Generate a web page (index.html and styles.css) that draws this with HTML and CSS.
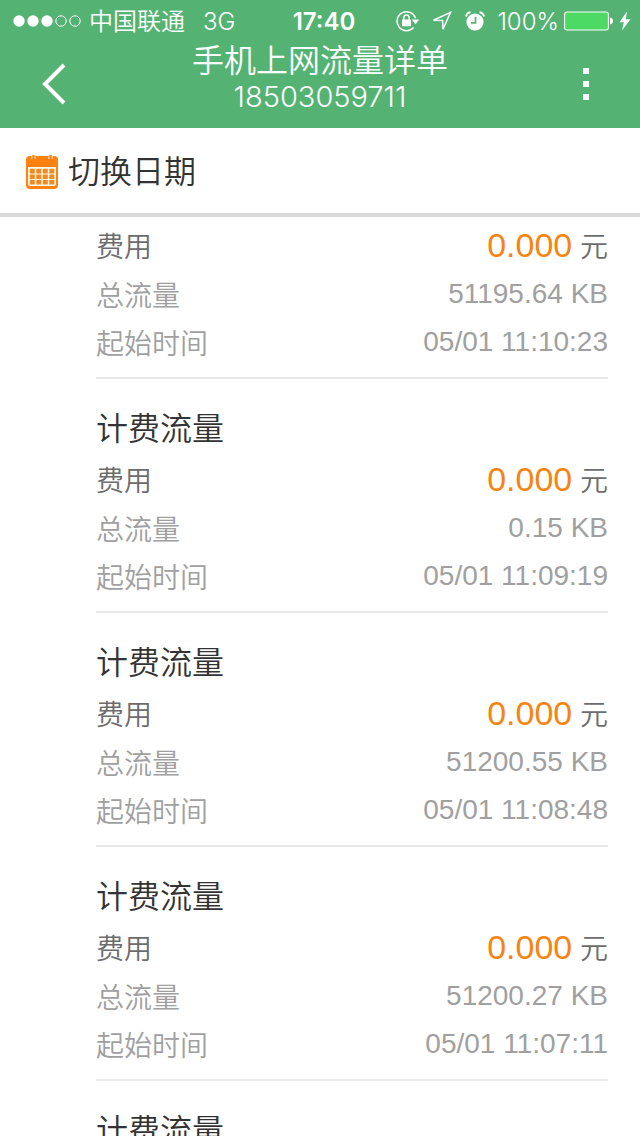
FILE: index.html
```html
<!DOCTYPE html>
<html lang="zh-CN">
<head>
<meta charset="utf-8">
<meta name="viewport" content="width=device-width, initial-scale=1">
<title>手机上网流量详单</title>
<link rel="stylesheet" href="styles.css">
</head>
<body>
<header class="top">
  <div class="status">
    <div class="status-left">
      <svg class="signal" width="68" height="12" viewBox="0 0 68 12" aria-hidden="true">
        <g fill="#fff"><circle cx="6" cy="6" r="5.7"/><circle cx="20" cy="6" r="5.7"/><circle cx="34" cy="6" r="5.7"/></g>
        <g fill="none" stroke="#fff"><circle cx="48" cy="6" r="5.2"/><circle cx="62" cy="6" r="5.2"/></g>
      </svg>
      <span class="carrier">中国联通</span>
      <span>3G</span>
    </div>
    <span class="clock">17:40</span>
    <div class="status-right">
      <svg width="24" height="22" viewBox="0 0 24 22" aria-hidden="true">
        <path d="M17.6 17.6A9.500 9.500 0 1 1 19.600 8.200" fill="none" stroke="#fff" stroke-width="1.500"/>
        <path d="M15.800 9.600h7.400l-3.700 4.600z" fill="#fff"/>
        <rect x="6" y="9.500" width="9" height="6.800" rx=".6" fill="#fff"/>
        <path d="M7.800 10V7.600a2.700 2.700 0 0 1 5.400 0V10" fill="none" stroke="#fff" stroke-width="1.500"/>
      </svg>
      <svg class="arrow" width="20" height="20" viewBox="0 0 20 20" aria-hidden="true">
        <path d="M1.500 9.200L18.500 1.400L11 18.200L10.600 9.400z" fill="none" stroke="#fff" stroke-width="1.500"/>
      </svg>
      <svg class="alarm" width="20" height="20" viewBox="0 0 20 20" aria-hidden="true">
        <circle cx="10" cy="11" r="8.600" fill="#fff"/>
        <path d="M.8 5.400A6 6 0 0 1 5.500 1.200M19.200 5.400A6 6 0 0 0 14.500 1.200" fill="none" stroke="#fff" stroke-width="1.700"/>
        <path d="M10.500 5.800v6H6" fill="none" stroke="#54b373" stroke-width="1.700"/>
      </svg>
      <span class="percent">100%</span>
      <svg width="50" height="20" viewBox="0 0 50 20" aria-hidden="true">
        <rect x=".6" y="1" width="43.800" height="18" rx="2.500" fill="#4cd964" stroke="#fff" stroke-width="1.100"/>
        <path d="M46 6.500c4 .8 4 6.200 0 7z" fill="#fff"/>
      </svg>
      <svg class="bolt" width="12" height="20" viewBox="0 0 12 20" aria-hidden="true">
        <path d="M8 .5L.5 11.200h4.300L3 19.500L11.500 8.200H6.800z" fill="#fff"/>
      </svg>
    </div>
  </div>
  <div class="nav">
    <button class="nav-button" type="button" aria-label="返回">
      <svg width="24" height="42" viewBox="0 0 24 42" aria-hidden="true"><path d="M22 2L3 21L22 40" fill="none" stroke="#fff" stroke-width="4"/></svg>
    </button>
    <div class="heading">
      <h1>手机上网流量详单</h1>
      <p>18503059711</p>
    </div>
    <button class="nav-button" type="button" aria-label="更多">
      <svg width="6" height="32" viewBox="0 0 6 32" aria-hidden="true"><path d="M0 0h6v6H0zM0 13h6v6H0zM0 26h6v6H0z" fill="#fff"/></svg>
    </button>
  </div>
</header>
<button class="switch-date" type="button">
  <svg width="34" height="36" viewBox="0 0 34 36" aria-hidden="true">
    <rect x="1" y="3" width="32" height="33" rx="4" fill="#ff8210"/>
    <path d="M8.500 1v5M25.500 1v5" stroke="#fff" stroke-width="4"/>
    <path d="M8.500 2v5M25.500 2v5" stroke="#ff8210" stroke-width="2.400"/>
    <path d="M3 14h28v17q0 2-2 2H5q-2 0-2-2z" fill="#fff7e8"/>
    <path d="M4.800 15.800h5v4.600h-5zM11.300 15.800h5v4.600h-5zM17.800 15.800h5v4.600h-5zM24.300 15.800h5v4.600h-5zM4.800 21.400h5V26h-5zM11.300 21.400h5V26h-5zM17.800 21.400h5V26h-5zM24.300 21.400h5V26h-5zM4.800 27h5v4.600h-5zM11.300 27h5v4.600h-5zM17.800 27h5v4.600h-5zM24.300 27h5v4.600h-5z" fill="#f28a22"/>
  </svg>
  <span>切换日期</span>
</button>
<main class="records">
  <section class="record record-partial">
    <dl>
      <div class="row fee"><dt>费用</dt><dd><strong>0.000</strong> 元</dd></div>
      <div class="row"><dt>总流量</dt><dd>51195.64 KB</dd></div>
      <div class="row"><dt>起始时间</dt><dd>05/01 11:10:23</dd></div>
    </dl>
  </section>
  <section class="record">
    <h2>计费流量</h2>
    <dl>
      <div class="row fee"><dt>费用</dt><dd><strong>0.000</strong> 元</dd></div>
      <div class="row"><dt>总流量</dt><dd>0.15 KB</dd></div>
      <div class="row"><dt>起始时间</dt><dd>05/01 11:09:19</dd></div>
    </dl>
  </section>
  <section class="record">
    <h2>计费流量</h2>
    <dl>
      <div class="row fee"><dt>费用</dt><dd><strong>0.000</strong> 元</dd></div>
      <div class="row"><dt>总流量</dt><dd>51200.55 KB</dd></div>
      <div class="row"><dt>起始时间</dt><dd>05/01 11:08:48</dd></div>
    </dl>
  </section>
  <section class="record">
    <h2>计费流量</h2>
    <dl>
      <div class="row fee"><dt>费用</dt><dd><strong>0.000</strong> 元</dd></div>
      <div class="row"><dt>总流量</dt><dd>51200.27 KB</dd></div>
      <div class="row"><dt>起始时间</dt><dd>05/01 11:07:11</dd></div>
    </dl>
  </section>
  <section class="record">
    <h2>计费流量</h2>
  </section>
</main>
</body>
</html>
```
FILE: styles.css
```css
* { box-sizing: border-box; }

body {
  display: flex;
  flex-direction: column;
  height: 100vh;
  margin: 0;
  overflow: hidden;
  background: #fff;
  color: #333;
  font-family: "Liberation Sans", "Noto Sans CJK SC", sans-serif;
  font-size: 28px;
  font-weight: 350;
}

h1, h2, p, dl, dd { margin: 0; font-weight: inherit; }

button {
  border: 0;
  padding: 0;
  background: none;
  color: inherit;
  font: inherit;
}

.top {
  flex: none;
  background: #54b373;
  color: #fff;
  font-family: Inter, "Noto Sans CJK SC", sans-serif;
}

.status {
  display: grid;
  grid-template-columns: 1fr auto 1fr;
  align-items: center;
  height: 40px;
  padding: 0 9px 0 13px;
  font-size: 24px;
  line-height: 40px;
}

.status span { padding-top: 2px; }
.status-left, .status-right { display: flex; align-items: center; }
.status-right { justify-content: flex-end; }
.carrier { margin: 0 18px 0 8px; }
.clock { padding-left: 4px; font-weight: 600; }
.arrow { margin: 0 13px 0 12px; }
.percent { margin: 0 5px 0 12px; }
.bolt { margin-left: 5px; }

.nav {
  display: flex;
  align-items: center;
  height: 88px;
}

.nav-button {
  display: flex;
  align-items: center;
  justify-content: center;
  width: 108px;
  height: 88px;
}

.heading { flex: 1; text-align: center; }
.heading h1 { font-size: 32px; line-height: 40px; }
.heading p { padding-bottom: 14px; font-size: 29px; line-height: 32px; }

.switch-date {
  flex: none;
  display: flex;
  align-items: center;
  gap: 9px;
  height: 89px;
  padding: 0 25px;
  border-bottom: 4px solid #d9d9d9;
  font-size: 32px;
}

.switch-date span { padding-bottom: 4px; }

.records {
  flex: 1;
  min-height: 0;
  overflow: hidden;
  padding: 0 32px 0 96px;
}

.record {
  padding: 23px 0 11px;
  border-bottom: 2px solid #e9e9e9;
}

.record h2, .record dt { font-family: "Noto Sans CJK SC", sans-serif; }
.record h2 { padding-bottom: 4px; font-size: 32px; line-height: 48px; }
.record-partial { padding-top: 3px; }

.row {
  display: flex;
  justify-content: space-between;
  height: 48px;
  line-height: 48px;
  color: #a0a0a0;
}

.fee {
  height: 50px;
  line-height: 50px;
  color: #6c6c6c;
}

.fee strong {
  color: #f78410;
  font-size: 34px;
  font-weight: inherit;
}
```
